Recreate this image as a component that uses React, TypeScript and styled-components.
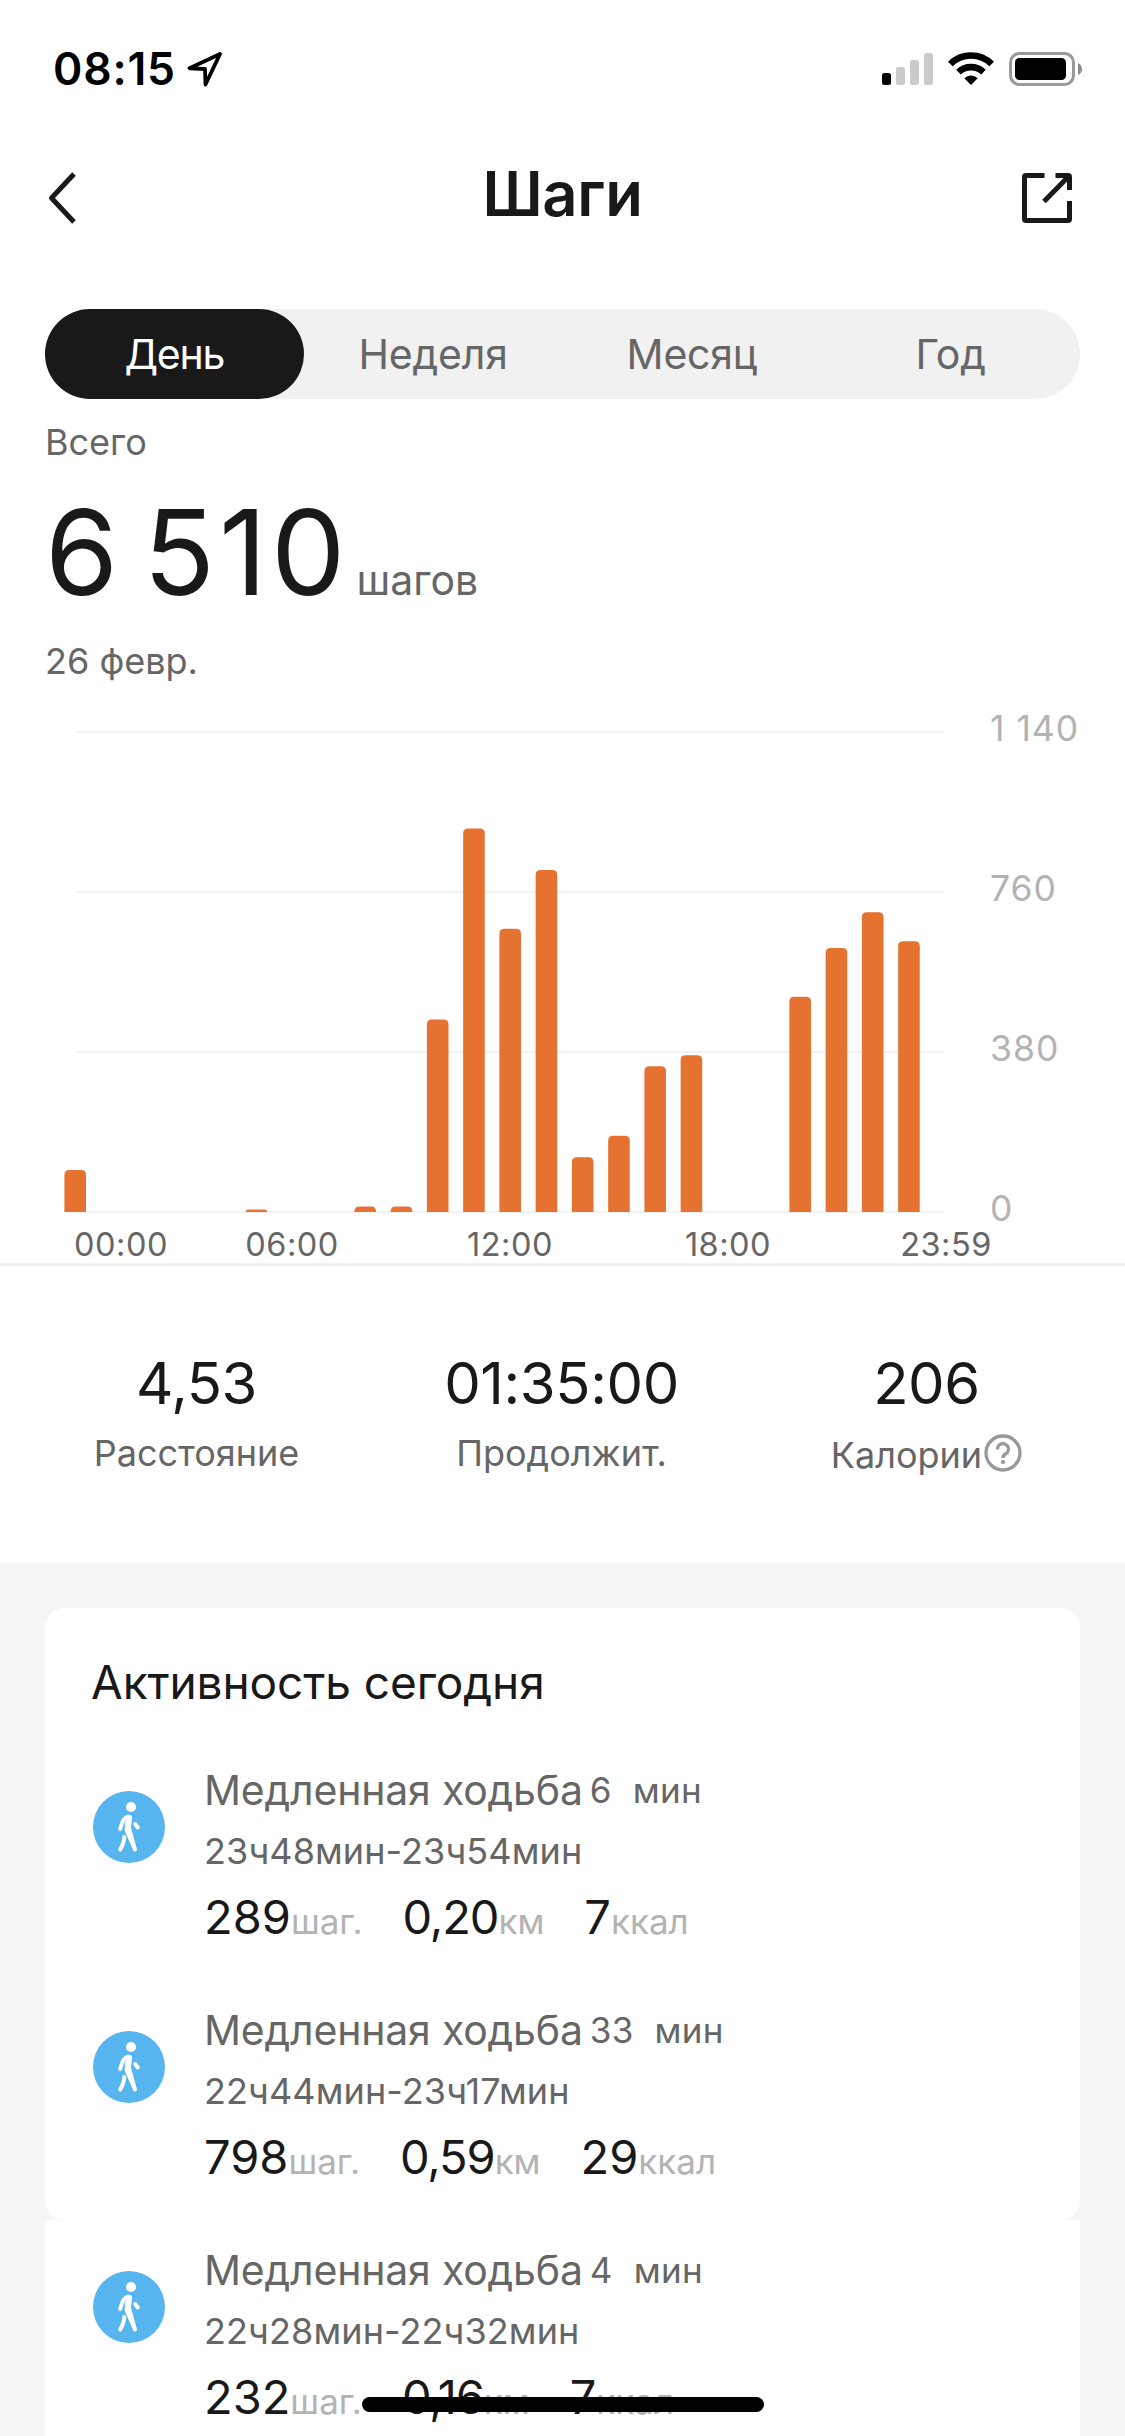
import React from "react";
import styled, { createGlobalStyle } from "styled-components";

const colors = {
  text: "#191919",
  secondary: "#666666",
  muted: "#b3b3b3",
  line: "#f2f2f2",
  page: "#f6f6f6",
  bar: "#e57231",
  walk: "#56b4ee",
};

const tabs = ["День", "Неделя", "Месяц", "Год"];
const yTicks = ["1 140", "760", "380", "0"];
const xTicks = ["00:00", "06:00", "12:00", "18:00", "23:59"];
const maxSteps = 1140;
const hourly = [
  100, 0, 0, 0, 0, 6, 0, 0, 13, 13, 457, 911, 673, 812, 130, 181, 346, 372, 0,
  0, 511, 627, 712, 643,
];

const activities = [
  { duration: "6", time: "23ч48мин-23ч54мин", steps: "289", km: "0,20", kcal: "7" },
  { duration: "33", time: "22ч44мин-23ч17мин", steps: "798", km: "0,59", kcal: "29" },
  { duration: "4", time: "22ч28мин-22ч32мин", steps: "232", km: "0,16", kcal: "7" },
];

type Activity = (typeof activities)[number];

const StatusIcons = () => (
  <svg width="202" height="36" viewBox="881 51 202 36">
    <rect x="882" y="73" width="9" height="12" rx="2.5" fill="#000" />
    <rect x="896" y="67" width="9" height="18" rx="2.5" fill="#cbcbcb" />
    <rect x="910" y="60" width="9" height="25" rx="2.5" fill="#cbcbcb" />
    <rect x="924" y="53" width="9" height="32" rx="2.5" fill="#cbcbcb" />
    <g fill="none" stroke="#000" strokeWidth="6.6">
      <path d="M950.3 64 A29.5 29.5 0 0 1 991.7 64" />
      <path d="M958.5 72.2 A18 18 0 0 1 983.5 72.2" />
    </g>
    <path d="M971 85 L964.3 78.3 A9.6 9.6 0 0 1 977.7 78.3 Z" />
    <rect x="1010.5" y="53.5" width="63" height="31" rx="9" fill="none" stroke="#999" strokeWidth="3" />
    <rect x="1015" y="58" width="51" height="22" rx="4.5" fill="#000" />
    <path d="M1078 63 Q1082 65 1082 69 Q1082 73 1078 75 Z" fill="#8c8c8c" />
  </svg>
);

const LocationIcon = () => (
  <svg width="36" height="36" viewBox="0 0 36 36">
    <path
      d="M33 3 L2.5 17.3 L18 18 L18.5 33.5 Z"
      fill="none"
      stroke="#000"
      strokeWidth="3.8"
      strokeLinejoin="round"
    />
  </svg>
);

const BackIcon = () => (
  <svg width="28" height="52" viewBox="0 0 28 52">
    <path
      d="M26 2 L3.5 26 L26 50"
      fill="none"
      stroke={colors.text}
      strokeWidth="5"
      strokeLinejoin="round"
    />
  </svg>
);

const ShareIcon = () => (
  <svg width="50" height="50" viewBox="0 0 50 50" fill="none" stroke={colors.text} strokeWidth="5">
    <path d="M22.5 2.5 H4 Q2.5 2.5 2.5 4 V46 Q2.5 47.5 4 47.5 H46 Q47.5 47.5 47.5 46 V28" />
    <path d="M33.5 2.5 H46 Q47.5 2.5 47.5 4 V17" />
    <path d="M46 4 L22 28.5" />
  </svg>
);

const HelpIcon = () => (
  <svg width="38" height="38" viewBox="0 0 38 38" fill="none" stroke="#999" strokeWidth="3.3">
    <circle cx="19" cy="19" r="17" />
    <path d="M13.5 15.5 A5.5 5.5 0 1 1 21.5 20 Q19 21.5 19 24" />
    <circle cx="19" cy="28" r="2.1" fill="#999" stroke="none" />
  </svg>
);

const WalkIcon = () => (
  <svg width="72" height="72" viewBox="0 0 72 72">
    <circle cx="36" cy="36" r="36" fill={colors.walk} />
    <g fill="none" stroke="#fff" strokeWidth="4" strokeLinecap="round" strokeLinejoin="round">
      <circle cx="38" cy="16" r="5.1" fill="#fff" stroke="none" />
      <path d="M35 25.5 Q30 28 29 32 L27.2 38" />
      <path d="M37 26 L36 37 L42 58.5 L33.5 39 L34.5 26 Z" fill="#fff" />
      <path d="M42.2 33 L44.7 36.5" />
      <path d="M31.2 46 Q31.2 50 29.5 54 L27.2 58.5" />
    </g>
  </svg>
);

const StepsChart = () => {
  const baseline = 482;
  return (
    <ChartSvg width="888" height="484" viewBox="0 0 888 484">
      {[2, 162, 322, 482].map((y) => (
        <rect key={y} x="16" y={y - 1} width="868" height="2" fill={colors.line} />
      ))}
      {hourly.map((steps, hour) => {
        const height = (steps / maxSteps) * 480;
        const left = 4.4 + hour * 36.25;
        const r = Math.min(5, height);
        if (!steps) return null;
        return (
          <path
            key={hour}
            fill={colors.bar}
            d={`M${left} ${baseline} V${baseline - height + r} q0 ${-r} ${r} ${-r} h${21.6 - 2 * r} q${r} 0 ${r} ${r} V${baseline} Z`}
          />
        );
      })}
    </ChartSvg>
  );
};

const ActivityRow = ({ item }: { item: Activity }) => (
  <Row>
    <WalkIcon />
    <RowBody>
      <RowTitle>
        Медленная ходьба<Duration>{item.duration}</Duration>
        <Duration>мин</Duration>
      </RowTitle>
      <RowTime>{item.time}</RowTime>
      <Metrics>
        <Metric>
          {item.steps}
          <Unit>шаг.</Unit>
        </Metric>
        <Metric $tight>
          {item.km}
          <Unit>км</Unit>
        </Metric>
        <Metric>
          {item.kcal}
          <Unit>ккал</Unit>
        </Metric>
      </Metrics>
    </RowBody>
  </Row>
);

const App = () => {
  return (
    <Screen>
      <GlobalStyle />
      <StatusBar>
        <Clock>
          08:15
          <LocationIcon />
        </Clock>
        <StatusIcons />
      </StatusBar>
      <Header>
        <BackIcon />
        <Title>Шаги</Title>
        <ShareIcon />
      </Header>
      <Tabs>
        {tabs.map((tab, index) => (
          <Tab key={tab} $active={index === 0}>
            {tab}
          </Tab>
        ))}
      </Tabs>
      <Summary>
        <Caption>Всего</Caption>
        <Total>
          6 510<TotalUnit>шагов</TotalUnit>
        </Total>
        <Caption>26 февр.</Caption>
      </Summary>
      <Chart>
        <StepsChart />
        <YAxis>
          {yTicks.map((tick) => (
            <span key={tick}>{tick}</span>
          ))}
        </YAxis>
      </Chart>
      <XAxis>
        {xTicks.map((tick) => (
          <span key={tick}>{tick}</span>
        ))}
      </XAxis>
      <Stats>
        <Stat>
          <StatValue>4,53</StatValue>
          <StatLabel>Расстояние</StatLabel>
        </Stat>
        <Stat>
          <StatValue>01:35:00</StatValue>
          <StatLabel>Продолжит.</StatLabel>
        </Stat>
        <Stat>
          <StatValue>206</StatValue>
          <StatLabel>
            <LoweredText>Калории</LoweredText>
            <HelpIcon />
          </StatLabel>
        </Stat>
      </Stats>
      <Feed>
        <Card $rounded>
          <CardTitle>Активность сегодня</CardTitle>
          <ActivityRow item={activities[0]} />
          <ActivityRow item={activities[1]} />
        </Card>
        <Card>
          <ActivityRow item={activities[2]} />
        </Card>
      </Feed>
      <HomeIndicator />
    </Screen>
  );
};

const GlobalStyle = createGlobalStyle`
  * {
    box-sizing: border-box;
  }
  body {
    margin: 0;
    background: #fff;
    overflow: hidden;
  }
  svg {
    display: block;
    flex: none;
  }
`;

const Screen = styled.main`
  position: relative;
  display: flex;
  flex-direction: column;
  width: 1125px;
  height: 2436px;
  overflow: hidden;
  background: #fff;
  color: ${colors.text};
  font-family: Inter, "Liberation Sans", sans-serif;
  white-space: nowrap;
`;

const StatusBar = styled.div`
  display: flex;
  flex: none;
  align-items: center;
  justify-content: space-between;
  height: 138px;
  padding: 0 42px 0 53px;
`;

const Clock = styled.div`
  display: flex;
  align-items: center;
  gap: 11px;
  color: #000;
  font-size: 44.5px;
  font-weight: 600;
  letter-spacing: 0.8px;
`;

const Header = styled.header`
  display: flex;
  flex: none;
  align-items: center;
  justify-content: space-between;
  height: 120px;
  padding: 0 53px 0 48px;
`;

const Title = styled.h1`
  margin: 0 0 8px 27px;
  font-size: 61.5px;
  font-weight: 600;
  letter-spacing: -0.3px;
  line-height: 72px;
`;

const Tabs = styled.nav`
  display: flex;
  flex: none;
  height: 90px;
  margin: 51px 45px 0;
  border-radius: 45px;
  background: #f1f1f1;
`;

const Tab = styled.div<{ $active: boolean }>`
  display: flex;
  flex: 1;
  align-items: center;
  justify-content: center;
  border-radius: 45px;
  background: ${({ $active }) => ($active ? colors.text : "transparent")};
  color: ${({ $active }) => ($active ? "#fff" : colors.secondary)};
  font-size: 41px;
  letter-spacing: ${({ $active }) => ($active ? "-1.2px" : "-0.2px")};
`;

const Summary = styled.section`
  display: flex;
  flex: none;
  flex-direction: column;
  padding: 21px 45px 0;
`;

const Caption = styled.div`
  color: ${colors.secondary};
  font-size: 36px;
  line-height: 44px;
`;

const Total = styled.div`
  height: 120px;
  margin: 28px 0 27px;
  font-size: 118px;
  letter-spacing: 4px;
  line-height: 120px;
  word-spacing: -16px;
`;

const TotalUnit = styled.span`
  margin-left: 7px;
  color: ${colors.secondary};
  font-size: 41px;
  letter-spacing: 0;
  line-height: 1;
`;

const Chart = styled.div`
  display: flex;
  flex: none;
  height: 520px;
  margin-top: 25px;
  padding-left: 60px;
`;

const ChartSvg = styled.svg`
  margin-top: 22px;
`;

const YAxis = styled.div`
  display: flex;
  flex-direction: column;
  justify-content: space-between;
  margin: 1px 0 -1px 42px;
  color: ${colors.muted};
  font-size: 35.5px;
  letter-spacing: 1px;
  line-height: 40px;
`;

const XAxis = styled.div`
  display: grid;
  flex: none;
  grid-template-columns: 178px 164px 272px 164px 272px;
  padding: 0 0 2px 32px;
  color: ${colors.secondary};
  font-size: 32.5px;
  letter-spacing: 0.5px;
  line-height: 33px;
  text-align: center;
`;

const Stats = styled.section`
  display: grid;
  flex: none;
  grid-template-columns: repeat(3, 1fr);
  height: 300px;
  padding: 85px 16px 0 14px;
  border-top: 3px solid ${colors.line};
`;

const Stat = styled.div`
  display: flex;
  flex-direction: column;
  align-items: center;
  gap: 16px;
`;

const StatValue = styled.div`
  font-size: 58px;
  letter-spacing: -0.4px;
  line-height: 64px;
`;

const StatLabel = styled.div`
  display: flex;
  align-items: center;
  gap: 2px;
  color: ${colors.secondary};
  font-size: 36px;
  line-height: 44px;
`;

const LoweredText = styled.span`
  position: relative;
  top: 2px;
`;

const Feed = styled.section`
  flex: 1;
  padding: 45px 45px 0;
  background: ${colors.page};
`;

const Card = styled.div<{ $rounded?: boolean }>`
  padding: 0 47px;
  border-radius: ${({ $rounded }) => ($rounded ? "20px" : "0")};
  background: #fff;
`;

const CardTitle = styled.h2`
  margin: 0 0 0 -1px;
  padding: 44px 0 28px;
  font-size: 46px;
  font-weight: 400;
  letter-spacing: -0.1px;
  line-height: 60px;
`;

const Row = styled.article`
  display: flex;
  height: 240px;
  gap: 39px;

  > svg {
    margin: 51px 0 0 1px;
  }
`;

const RowBody = styled.div`
  display: flex;
  flex-direction: column;
  gap: 13px;
  padding-top: 25px;
`;

const RowTitle = styled.div`
  display: flex;
  align-items: center;
  color: ${colors.secondary};
  font-size: 41px;
  letter-spacing: -0.2px;
  line-height: 50px;
`;

const Duration = styled.span`
  margin-left: 7px;
  font-size: 35px;
  letter-spacing: 0.3px;

  & + & {
    margin-left: 21px;
  }
`;

const RowTime = styled.div`
  color: ${colors.secondary};
  font-size: 36px;
  letter-spacing: 0.1px;
  line-height: 46px;
`;

const Metrics = styled.div`
  display: flex;
  gap: 40px;
`;

const Metric = styled.div<{ $tight?: boolean }>`
  height: 60px;
  font-size: 47px;
  letter-spacing: ${({ $tight }) => ($tight ? "-1.1px" : "0")};
  line-height: 60px;
`;

const Unit = styled.span`
  color: ${colors.muted};
  font-size: 35px;
  letter-spacing: 0;
  line-height: 1;
`;

const HomeIndicator = styled.div`
  position: absolute;
  bottom: 24px;
  left: 362px;
  width: 402px;
  height: 15px;
  border-radius: 8px;
  background: #000;
`;

export default App;
